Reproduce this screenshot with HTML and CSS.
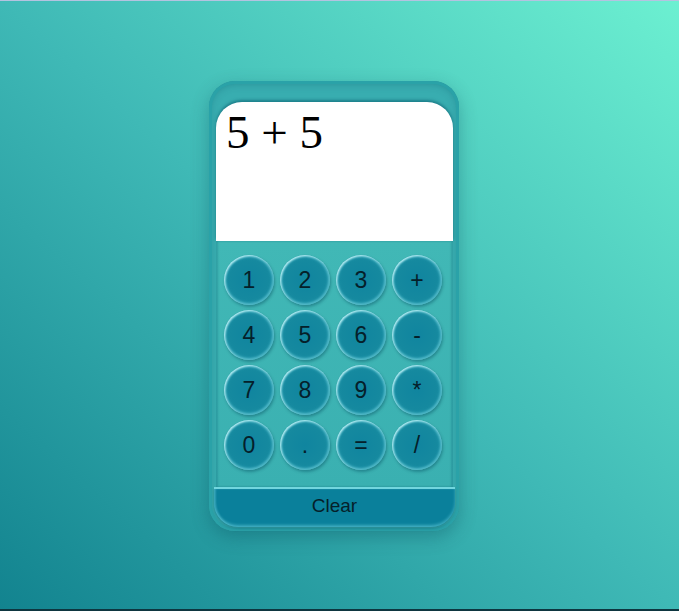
FILE: index.html
```html
<!DOCTYPE html>
<html>
<head>
<meta charset="utf-8">
<link rel="stylesheet" href="styles.css">
</head>
<body>
<div class="calc">
  <div class="screen">5 + 5</div>
  <div class="keys">
    <button class="key">1</button>
    <button class="key">2</button>
    <button class="key">3</button>
    <button class="key">+</button>
    <button class="key">4</button>
    <button class="key">5</button>
    <button class="key">6</button>
    <button class="key">-</button>
    <button class="key">7</button>
    <button class="key">8</button>
    <button class="key">9</button>
    <button class="key">*</button>
    <button class="key">0</button>
    <button class="key">.</button>
    <button class="key">=</button>
    <button class="key">/</button>
  </div>
  <button class="clear">Clear</button>
</div>
</body>
</html>
```
FILE: styles.css
```css
html, body {
  margin: 0;
  padding: 0;
}
body {
  height: 611px;
  box-sizing: border-box;
  border-top: 1px solid #b4c3e0;
  border-bottom: 2px solid #0e3640;
  background: linear-gradient(to bottom left, #6cf0d1 0%, #3fb9b6 50%, #12838f 100%);
  font-family: "Liberation Sans", Arial, sans-serif;
  display: flex;
  justify-content: flex-start;
  padding-top: 80px;
  padding-left: 209px;
}
.calc {
  width: 250px;
  height: 450px;
  box-sizing: border-box;
  border-radius: 26px;
  background: #38adb0;
  box-shadow: 0 6px 18px rgba(0, 60, 80, 0.3), inset 0 0 0 3px #2aa2a8, inset 0 2px 8px rgba(0, 70, 90, 0.35);
  padding: 21px 4px 4px 5px;
  display: flex;
  flex-direction: column;
}
.screen {
  margin: 0 2px 0 2px;
  height: 139px;
  background: #fff;
  border-radius: 26px 26px 0 0;
  box-shadow: 0 -2px 3px rgba(0, 80, 100, 0.5);
  font-family: "Liberation Serif", "Times New Roman", serif;
  font-size: 47px;
  line-height: 1;
  padding: 7px 10px;
  box-sizing: border-box;
  color: #000;
}
.keys {
  display: grid;
  grid-template-columns: repeat(4, 50px);
  grid-auto-rows: 50px;
  column-gap: 6px;
  row-gap: 5px;
  padding: 14px 0 0 8px;
  background: linear-gradient(#41b8b6, #3ab0b1);
  box-shadow: inset 2px 0 2px rgba(0, 90, 110, 0.25), inset -2px 0 2px rgba(0, 90, 110, 0.25);
  margin: 0 2px;
  flex: 1;
}
.key {
  width: 50px;
  height: 50px;
  border-radius: 50%;
  border: none;
  padding: 0;
  background: radial-gradient(circle at 50% 50%, #10859f 0%, #15899f 55%, #2fa4b7 100%);
  box-shadow: inset 1px 1px 2px rgba(210, 252, 255, 0.8), inset 0 0 2px 2px rgba(120, 215, 228, 0.5), 1px 2px 3px rgba(0, 70, 90, 0.4);
  font-family: "Liberation Sans", Arial, sans-serif;
  font-size: 23px;
  color: #05202a;
}
.clear {
  height: 40px;
  border: none;
  border-top: 2px solid #72d6de;
  border-radius: 0 0 24px 24px;
  background: #0a809b;
  box-shadow: inset 0 -2px 3px rgba(120, 220, 230, 0.45), inset 2px 0 2px rgba(120, 220, 230, 0.3), 0 2px 3px rgba(0, 70, 90, 0.3);
  font-family: "Liberation Sans", Arial, sans-serif;
  font-size: 19px;
  color: #05202a;
  padding: 0 0 4px;
}
```
